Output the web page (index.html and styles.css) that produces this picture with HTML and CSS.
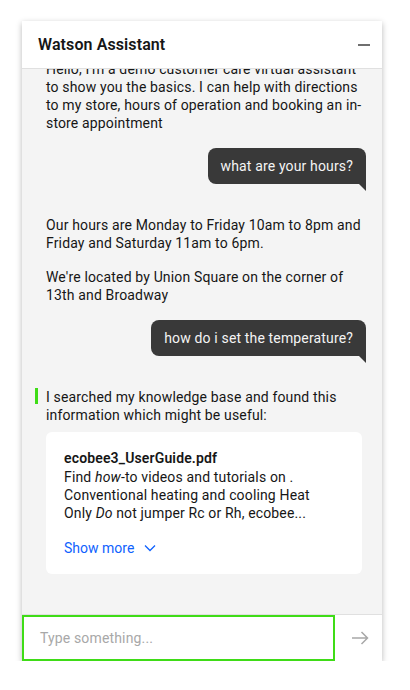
FILE: index.html
```html
<!DOCTYPE html>
<html lang="en">
<head>
<meta charset="utf-8">
<title>Watson Assistant</title>
<link rel="stylesheet" href="styles.css">
</head>
<body>
<div class="panel">
  <header class="header">
    <h1 class="title">Watson Assistant</h1>
    <button class="minimize" aria-label="Minimize"><span class="minus"></span></button>
  </header>
  <main class="messages">
    <div class="bot-msg">
      <p>Hello, I'm a demo customer care virtual assistant to show you the basics. I can help with directions to my store, hours of operation and booking an in-store appointment</p>
    </div>
    <div class="user-msg"><div class="bubble">what are your hours?</div></div>
    <div class="bot-msg">
      <p>Our hours are Monday to Friday 10am to 8pm and Friday and Saturday 11am to 6pm.</p>
      <p>We're located by Union Square on the corner of 13th and Broadway</p>
    </div>
    <div class="user-msg"><div class="bubble">how do i set the temperature?</div></div>
    <div class="bot-msg search">
      <p class="search-intro">I searched my knowledge base and found this information which might be useful:</p>
      <div class="card">
        <div class="card-title">ecobee3_UserGuide.pdf</div>
        <div class="card-body">Find <em>how</em>-to videos and tutorials on . Conventional heating and cooling Heat Only <em>Do</em> not jumper Rc or Rh, ecobee...</div>
        <button class="show-more">Show more
          <svg class="chev" width="12" height="8" viewBox="0 0 12 8"><path d="M1 1.5 L6 6.5 L11 1.5" fill="none" stroke="#0f62fe" stroke-width="1.3"/></svg>
        </button>
      </div>
    </div>
  </main>
  <footer class="input-row">
    <div class="input-box"><span class="placeholder">Type something...</span></div>
    <button class="send" aria-label="Send">
      <svg width="18" height="14" viewBox="0 0 18 14"><path d="M1 7 H16.5 M10.5 1 L16.5 7 L10.5 13" fill="none" stroke="#a8a8a8" stroke-width="1.5"/></svg>
    </button>
  </footer>
</div>
</body>
</html>
```
FILE: styles.css
```css
* { box-sizing: border-box; }
html, body { margin: 0; padding: 0; background: #ffffff; }
body {
  font-family: Roboto, "Liberation Sans", sans-serif;
  color: #161616;
  font-size: 14px;
  letter-spacing: 0.15px;
}
.panel {
  margin: 21px 0 0 22px;
  width: 360px;
  height: 640px;
  display: flex;
  flex-direction: column;
  background: #f4f4f4;
  box-shadow: 0 2px 6px rgba(0,0,0,0.28);
}
.header {
  height: 48px;
  flex: none;
  display: flex;
  align-items: center;
  justify-content: space-between;
  background: #ffffff;
  border-bottom: 1px solid #e0e0e0;
  padding: 0 12px 0 16px;
  position: relative;
  z-index: 1;
}
.title {
  margin: 0;
  font-size: 16px;
  font-weight: 600;
  color: #161616;
  line-height: 20px;
  letter-spacing: 0.1px;
}
.minimize {
  border: 0;
  background: none;
  padding: 0;
  width: 12px;
  height: 20px;
  display: flex;
  align-items: center;
}
.minus { display: block; width: 12px; height: 2px; background: #6f6f6f; }
.messages {
  flex: 1;
  overflow: hidden;
  display: flex;
  flex-direction: column;
  justify-content: flex-end;
  padding: 0 16px 40px 24px;
}
.bot-msg { position: relative; }
.bot-msg p { margin: 0; line-height: 18px; }
.bot-msg p + p { margin-top: 16px; }
.user-msg {
  display: flex;
  justify-content: flex-end;
  margin: 16px 0 32px;
}
.bubble {
  position: relative;
  background: #393939;
  color: #f4f4f4;
  border-radius: 8px 8px 0 8px;
  padding: 9px 13px;
  line-height: 18px;
}
.bubble::after {
  content: "";
  position: absolute;
  right: 0;
  top: 100%;
  width: 7px;
  height: 7px;
  background: #393939;
  clip-path: polygon(0 0, 100% 0, 100% 100%);
}
.search-intro::before {
  content: "";
  position: absolute;
  left: -11px;
  top: 0;
  width: 3px;
  height: 16px;
  background: #3fdc17;
}
.card {
  margin-top: 8px;
  background: #ffffff;
  border-radius: 6px;
  padding: 16px 28px 16px 18px;
  width: 316px;
}
.card-title { font-weight: 600; line-height: 20px; }
.card-body { line-height: 18px; }
.show-more {
  margin-top: 16px;
  border: 0;
  background: none;
  padding: 0;
  font: inherit;
  color: #0f62fe;
  line-height: 20px;
  display: flex;
  align-items: center;
  gap: 10px;
}
.chev { display: block; }
.input-row {
  flex: none;
  display: flex;
  background: #ffffff;
  border-top: 1px solid #e0e0e0;
  height: 47px;
}
.input-box {
  width: 313px;
  border: 2px solid #3fdc17;
  display: flex;
  align-items: center;
  padding-left: 16px;
}
.placeholder { color: #a8a8a8; }
.send {
  flex: 1;
  border: 0;
  background: none;
  padding: 0;
  display: flex;
  align-items: center;
  justify-content: center;
}
.send svg { display: block; margin-left: 2px; }
```
